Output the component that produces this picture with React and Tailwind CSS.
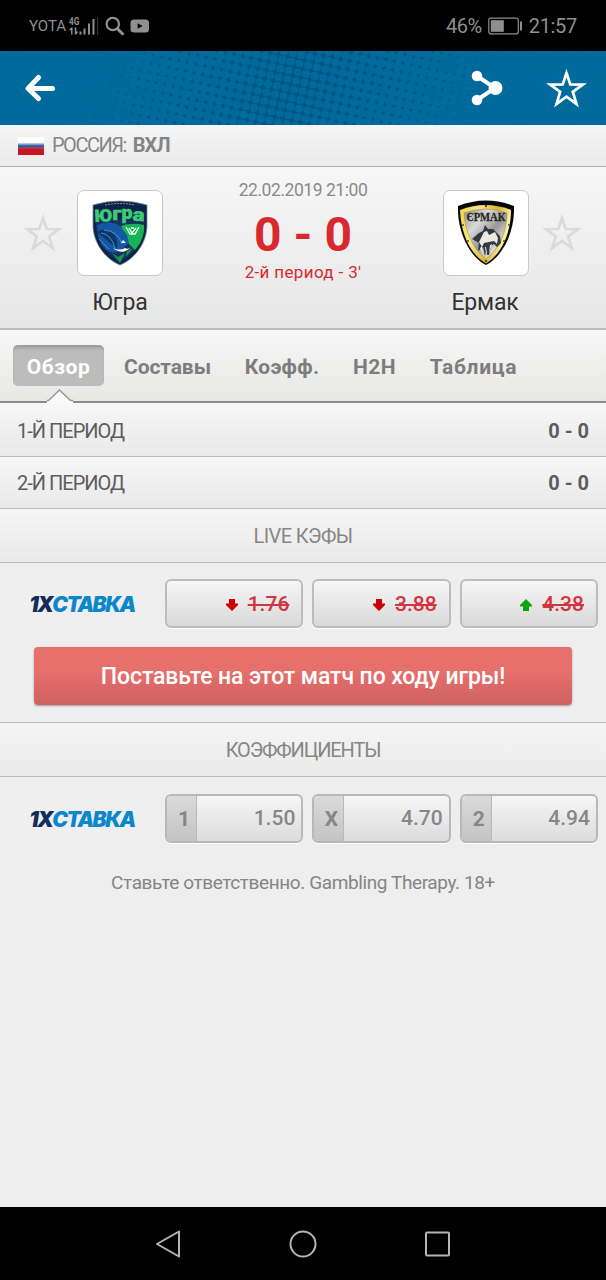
import React from 'react';
import clsx from 'clsx';

const tabs = [
  { id: 'overview', label: 'Обзор', className: 'w-[91px] tracking-[0.5px]' },
  { id: 'lineups', label: 'Составы', className: 'ml-[20px] w-[87px] tracking-[-0.1px]' },
  { id: 'odds', label: 'Коэфф.', className: 'ml-[34px] w-[74px] tracking-[0.3px]' },
  { id: 'h2h', label: 'H2H', className: 'ml-[34px] w-[43px] tracking-[0.4px]' },
  { id: 'table', label: 'Таблица', className: 'ml-[34px] w-[87px] tracking-[0.7px]' }
];

const periods = [
  { name: '1-Й ПЕРИОД', score: '0 - 0' },
  { name: '2-Й ПЕРИОД', score: '0 - 0' }
];

const liveOdds = [
  { value: '1.76', up: false },
  { value: '3.88', up: false },
  { value: '4.38', up: true }
];

const preOdds = [
  { name: '1', value: '1.50' },
  { name: 'X', value: '4.70' },
  { name: '2', value: '4.94' }
];

// Halftone grid: dots grow towards the edges until they swallow the dark background
const dots = [];
const angle = (12 * Math.PI) / 180;
for (let row = -24; row < 24; row++) {
  for (let col = -6; col < 84; col++) {
    const x = col * 8.8 * Math.cos(angle) - row * 8.8 * Math.sin(angle);
    const y = col * 8.8 * Math.sin(angle) + row * 8.8 * Math.cos(angle) - 60;
    if (x < -8 || x > 614 || y < -8 || y > 82) continue;
    const d = Math.min(1, Math.abs(x - 290 + (y - 37) * 0.4) / 250);
    dots.push({ x: x.toFixed(1), y: y.toFixed(1), r: (3.9 + d * 2.5).toFixed(2) });
  }
}

const Star = ({ className, strokeWidth }) => (
  <svg viewBox="0 0 40 40" className={className} fill="none" stroke="currentColor" strokeWidth={strokeWidth}>
    <path d="M20 5 L23.700 16 L36 16.200 L26.200 23.300 L29.700 35 L20 28 L10.300 35 L13.800 23.300 L4 16.200 L16.300 16 Z" />
  </svg>
);

const StatusBar = () => (
  <div className="flex h-[51px] items-center bg-black pl-[29px] pr-[29px] pt-[1px] text-[#8f8f8f]">
    <span className="text-[15px] tracking-[0px]">YOTA</span>
    <svg viewBox="0 0 30 20" className="ml-[3px] h-[20px] w-[30px]" fill="currentColor">
      <text x="0" y="8.500" fontSize="11" fontWeight="700" textLength="10.500" lengthAdjust="spacingAndGlyphs">4G</text>
      <path d="M2.800 11.500v7M2.800 12l-2 2M6.500 18.500v-7M6.500 18l2-2.500" stroke="currentColor" strokeWidth="1.500" fill="none" />
      <path d="M10.500 15.500h2v3h-2zM14.500 12.500h2v6h-2zM19 7.500h2v11h-2zM23.500 3h2v15.500h-2z" />
      <path d="M28 1h1.200v18h-1.200z" opacity="0.35" />
    </svg>
    <svg viewBox="0 0 20 20" className="ml-[6px] h-[20px] w-[20px]" fill="none" stroke="currentColor">
      <circle cx="7.800" cy="8" r="6.200" strokeWidth="2.200" />
      <path d="M12.400 12.600 L18.500 18.700" strokeWidth="3" />
    </svg>
    <svg viewBox="0 0 20 14" className="ml-[5px] h-[14px] w-[20px]">
      <rect x="0.500" y="0.500" width="18.500" height="13" rx="3.500" fill="currentColor" />
      <path d="M7.600 4.200 L12.600 7 L7.600 9.800 Z" fill="#000" />
    </svg>
    <span className="ml-auto text-[20px] tracking-[-0.5px]">46%</span>
    <svg viewBox="0 0 35 18" className="ml-[6px] h-[18px] w-[35px]">
      <rect x="0.800" y="1.200" width="29.500" height="15.600" rx="2" fill="none" stroke="currentColor" strokeWidth="1.200" />
      <rect x="2.800" y="3.200" width="13" height="11.600" fill="currentColor" />
      <rect x="32" y="4.500" width="2" height="9" fill="currentColor" />
    </svg>
    <span className="ml-[6px] text-[20px] tracking-[-0.3px]">21:57</span>
  </div>
);

const Header = () => (
  <header className="relative flex h-[74px] items-center bg-[#006a9d] pl-[24px] pr-[19px] text-white">
    <svg viewBox="0 0 606 74" className="absolute inset-0 h-[74px] w-full">
      <rect width="606" height="74" fill="#005682" />
      {dots.map((dot, i) => (
        <circle key={i} cx={dot.x} cy={dot.y} r={dot.r} fill="#006a9d" />
      ))}
    </svg>
    <svg viewBox="0 0 32 30" className="relative h-[30px] w-[32px]" fill="none" stroke="currentColor" strokeWidth="5" strokeLinecap="round" strokeLinejoin="round">
      <path d="M14.500 4.500 L4 15.500 L14.500 25.500 M5 15.500 H28.500" />
    </svg>
    <svg viewBox="0 0 32 36" className="relative ml-auto h-[36px] w-[32px]" fill="currentColor">
      <path d="M6 6 L24 18 L6 30" fill="none" stroke="currentColor" strokeWidth="4" />
      <circle cx="6" cy="6" r="5.300" />
      <circle cx="6" cy="30" r="5.300" />
      <circle cx="24.500" cy="18" r="7" />
    </svg>
    <Star className="relative ml-[43px] h-[41px] w-[41px]" strokeWidth="2.700" />
  </header>
);

const League = () => (
  <div className="flex h-[42px] items-center border-b border-[#aeaeae] bg-linear-to-b from-[#f5f5f5] to-[#ebebeb] pb-[2px] pl-[18px] text-[20px] text-[#858585]">
    <div className="mt-[3px] h-[18px] w-[26px] bg-linear-to-b from-white from-30% via-[#1c4fa0] via-50% to-[#cb1422] to-68%" />
    <span className="ml-[8px] tracking-[-1.5px]">РОССИЯ:</span>
    <span className="ml-[7px] font-bold tracking-[-1px]">ВХЛ</span>
  </div>
);

const UgraLogo = () => (
  <svg viewBox="0 0 56 66" className="h-[66px] w-[56px]">
    <path d="M1 5 Q28 -3 55 5 V27 C54 45 41 60 28 65 C15 60 2 45 1 27 Z" fill="#0d2447" stroke="#77879b" strokeWidth="0.8" />
    <path d="M4 23 Q28 15 52 23 V28 C51 43 39 57 28 61.500 C17 57 5 43 4 28 Z" fill="#12345e" />
    <path d="M29 26 Q40 22 52 25 C53 34 49 43 43 50 L36 43 L33 36 Z" fill="#18b356" />
    <path d="M5 25 Q17 20 27 25 L35 35 L37 43 L28 51 Q17 56 10 45 Q5 36 5 25 Z" fill="#1457a5" />
    <path d="M5 32 Q12 27 19 32 Q27 37 25 49 Q17 42 5 32 Z" fill="#103468" />
    <path d="M9 33 Q19 34 23 48 M12 30 Q26 31 30 44 M7 39 L17 49" fill="none" stroke="#4a9be0" strokeWidth="0.900" />
    <path d="M21 48 Q31 56 39 47 Q36 50 33 48 Q28 51 21 48 Z" fill="#fff" />
    <path d="M31 40 L34 43 L29 43 Z" fill="#fff" />
    <path d="M34 27 L38 34 H43 L47 27 M37 28 L40 33 L44 28 M39 28 H42" fill="none" stroke="#e7fff0" strokeWidth="1.400" />
    <path d="M20 53 L26 57 L33 53 L28 63 Z M35 51 L41 48 L34 57 Z" fill="#16994f" />
    <path d="M13 5 Q28 2 43 5" fill="none" stroke="#a6b5c8" strokeWidth="0.800" strokeDasharray="2 1" />
    <g fontSize="17" fontWeight="900" fill="#3fca78" stroke="#3fca78" strokeWidth="0.500">
      <text x="2.500" y="21.500" textLength="18" lengthAdjust="spacingAndGlyphs" transform="rotate(-3 11 16)">Ю</text>
      <text x="20.500" y="19.500" fontSize="18" textLength="9" lengthAdjust="spacingAndGlyphs">г</text>
      <text x="29.500" y="18.500" fontSize="18" textLength="11" lengthAdjust="spacingAndGlyphs">р</text>
      <text x="40.500" y="21" fontSize="18" textLength="12" lengthAdjust="spacingAndGlyphs" transform="rotate(4 46 16)">а</text>
    </g>
  </svg>
);

const ErmakLogo = () => (
  <svg viewBox="0 0 56 66" className="h-[66px] w-[56px]">
    <defs>
      <linearGradient id="gold" x1="0" y1="0" x2="1" y2="0.300">
        <stop offset="0" stopColor="#f0d43a" />
        <stop offset="0.350" stopColor="#f8ea8a" />
        <stop offset="0.700" stopColor="#d8b52c" />
        <stop offset="1" stopColor="#fff6b5" />
      </linearGradient>
      <linearGradient id="steel" x1="0" y1="0" x2="1" y2="1">
        <stop offset="0" stopColor="#8d8d8d" />
        <stop offset="0.300" stopColor="#d9d9d9" />
        <stop offset="0.550" stopColor="#989898" />
        <stop offset="0.800" stopColor="#e8e8e8" />
        <stop offset="1" stopColor="#8e8e8e" />
      </linearGradient>
    </defs>
    <path d="M0 6 Q28 -5 56 6 C57 30 46 56 28 65 C10 56 -1 30 0 6 Z" fill="#080808" />
    <path d="M2 10 Q28 0 53 10 C53 32 44 54 28 63.500 C12 54 3 34 2 10 Z" fill="url(#gold)" />
    <path d="M6 13 Q28 5 49 13 C49 31 41 50 28 58.500 C15 50 7 31 6 13 Z" fill="url(#steel)" stroke="#aa9140" strokeWidth="0.600" />
    <text x="8.500" y="20.500" fontFamily="Liberation Serif, serif" fontSize="13" fontWeight="700" fill="#2b241b" stroke="#2b241b" strokeWidth="0.300" textLength="39" lengthAdjust="spacingAndGlyphs">ЄРМАК</text>
    <path d="M14 39 L21 33 L25 31 L27 25 L30 29 L35 29 L42 36 L43 43 L39 47 L36 44 L33 46 L31 55 L29 55 L29 47 L27 56 L25 47 L20 51 L21 43 Z" fill="#333941" />
    <path d="M26 32 L29 31 L31 35 L37 32 L40 38 L39 44 L36 41 L31 42 L26 43 L24 47 L21 42 Z M22 48 L24 46 L25 55 Z M32 45 L34 44 L31 53 Z M27 47 L28 47 L28 53 Z" fill="#ece9df" />
    <g fill="#5c4b12">
      <circle cx="28" cy="6" r="1.200" />
      <circle cx="5" cy="25" r="1" />
      <circle cx="51" cy="25" r="1" />
      <circle cx="10" cy="41" r="1" />
      <circle cx="46" cy="41" r="1" />
      <circle cx="28" cy="61" r="1.200" />
    </g>
  </svg>
);

const Team = ({ name, children, className }) => (
  <div className="flex w-[86px] flex-col items-center">
    <div className="flex h-[86px] w-[86px] items-center justify-center rounded-[7px] border border-[#c9c9c9] bg-white">
      {children}
    </div>
    <span className={clsx('mt-[13px] text-[23px] leading-[28px] text-[#333]', className)}>{name}</span>
  </div>
);

const Match = () => (
  <section className="flex h-[163px] items-start border-b-2 border-[#bababa] bg-linear-to-b from-[#f7f7f7] to-[#e6e6e6] pl-[23px] pr-[24px] pt-[23px]">
    <Star className="mt-[23px] h-[40px] w-[40px] text-[#dadada]" strokeWidth="2.700" />
    <div className="ml-[14px]">
      <Team name="Югра" className="tracking-[0px]"><UgraLogo /></Team>
    </div>
    <div className="-mt-[11px] flex flex-1 flex-col items-center whitespace-nowrap">
      <span className="text-[17.5px] leading-[22px] tracking-[-0.45px] text-[#8a8a8a]">22.02.2019 21:00</span>
      <span className="mt-[10px] text-[48px] leading-[48px] font-bold text-[#d8292f]">0 - 0</span>
      <span className="mt-[2px] text-[17px] leading-[22px] tracking-[0.35px] text-[#d8292f]">2-й период - 3'</span>
    </div>
    <Team name="Ермак" className="relative -left-px tracking-[-0.2px]"><ErmakLogo /></Team>
    <Star className="ml-[13px] mt-[23px] h-[40px] w-[40px] text-[#dadada]" strokeWidth="2.700" />
  </section>
);

const Tabs = () => (
  <nav className="relative flex h-[73px] items-start border-b-2 border-[#8e8e8e] bg-linear-to-b from-[#f7f7f7] to-[#e7e7e5] pl-[13px] pt-[15px]">
    {tabs.map((tab, i) => (
      <div
        key={tab.id}
        className={clsx(
          'flex h-[41px] items-center justify-center whitespace-nowrap text-[21px] font-bold',
          i === 0
            ? 'rounded-[5px] border-t-2 border-[#9d9d9d] bg-[#bcbcbc] pt-[3px] text-white shadow-[inset_0_2px_2px_#aaaaaa]'
            : 'pt-[5px] text-[#7d7d7d]',
          tab.className
        )}
      >
        {tab.label}
      </div>
    ))}
    <svg viewBox="0 0 26 16" className="absolute -bottom-[4px] left-[47px] h-[16px] w-[26px]">
      <path d="M0 15 V12 H1 L12.500 1 L24 12 H26 V15 Z" fill="#f9f9f9" />
      <path d="M0 11.500 H1.500 L12.500 1 L23.500 11.500 H26" fill="none" stroke="#999" strokeWidth="1.500" />
    </svg>
  </nav>
);

const SectionTitle = ({ children, className }) => (
  <div className={clsx('flex items-center justify-center border-b border-[#b9b9b9] bg-linear-to-b from-[#f6f6f6] to-[#e9e9e9] text-[20px] text-[#868686]', className)}>
    {children}
  </div>
);

const Bookmaker = () => (
  <div className="flex h-[42px] w-[130px] items-center justify-center bg-[#efefef] pt-[2px] font-['Inter',sans-serif] text-[21px] font-black italic">
    <span className="tracking-[-1.5px] text-[#102d5c]">1X</span>
    <span className="tracking-[-1.5px] text-[#0d87cb]">СТАВКА</span>
  </div>
);

const OddsArrow = ({ up }) => (
  <svg viewBox="0 0 14 14" className={clsx('h-[14px] w-[14px]', up ? 'rotate-180 text-[#0ba60b]' : 'text-[#cc0000]')} fill="currentColor">
    <path d="M4 1 H10 V5.500 H13 V7 L7 13 L1 7 V5.500 H4 Z" />
  </svg>
);

const App = () => {
  return (
    <div className="flex h-[1280px] w-[606px] flex-col overflow-hidden bg-[#eeeeee] font-['Roboto',sans-serif]">
      <StatusBar />
      <Header />
      <League />
      <Match />
      <Tabs />

      {/* Periods */}
      {periods.map((period, i) => (
        <div
          key={period.name}
          className={clsx(
            'flex items-center justify-between border-b border-[#b9b9b9] bg-linear-to-b from-[#f7f7f7] to-[#e9e9e9] pl-[17px] pr-[17px] text-[20px] text-[#5d5d5d]',
            i === 0 ? 'h-[54px] pt-[2px]' : 'h-[52px]'
          )}
        >
          <span className="tracking-[-1px]">{period.name}</span>
          <span className="font-bold">{period.score}</span>
        </div>
      ))}

      {/* Live odds */}
      <SectionTitle className="h-[54px] tracking-[-0.6px]">LIVE КЭФЫ</SectionTitle>
      <div className="flex items-center gap-[9px] pl-[17px] pr-[8px] pt-[16px]">
        <div className="mr-[9px]"><Bookmaker /></div>
        {liveOdds.map(odd => (
          <div key={odd.value} className="flex h-[49px] flex-1 items-center justify-end rounded-[6px] border-2 border-[#bcbcbc] bg-linear-to-b from-[#f6f6f6] to-[#d9d9d9] pr-[12px] pt-[2px] shadow-[0_1px_1px_#ffffff]">
            <OddsArrow up={odd.up} />
            <span className="ml-[9px] text-[21px] font-medium text-[#d33540] line-through decoration-2">{odd.value}</span>
          </div>
        ))}
      </div>
      <button className="mx-[34px] mt-[19px] h-[58px] shrink-0 rounded-[4px] bg-linear-to-b from-[#e76f6c] from-40% to-[#ce6260] pt-[2px] text-[23px] font-medium tracking-[-0.1px] whitespace-nowrap text-white shadow-[0_1px_2px_#999999]">
        Поставьте на этот матч по ходу игры!
      </button>

      {/* Pre-match odds */}
      <SectionTitle className="mt-[17px] h-[55px] border-t tracking-[-1.15px]">КОЭФФИЦИЕНТЫ</SectionTitle>
      <div className="flex items-center gap-[9px] pl-[17px] pr-[8px] pt-[17px]">
        <div className="mr-[9px]"><Bookmaker /></div>
        {preOdds.map(odd => (
          <div key={odd.name} className="flex h-[49px] flex-1 overflow-hidden rounded-[6px] border-2 border-[#b8b8b8] bg-linear-to-b from-[#f6f6f6] to-[#dcdcdc] text-[21px] text-[#868686] shadow-[0_1px_1px_#ffffff]">
            <div className="flex w-[30px] items-center justify-center border-r border-[#b8b8b8] bg-linear-to-b from-[#dadada] to-[#c4c4c4] pl-[5px] pt-[3px] font-bold">{odd.name}</div>
            <div className="flex flex-1 items-center justify-end pr-[6px] pt-[1px] font-medium">{odd.value}</div>
          </div>
        ))}
      </div>
      <p className="mt-[26px] text-center text-[19px] leading-[28px] tracking-[-0.4px] whitespace-nowrap text-[#858585]">
        Ставьте ответственно. Gambling Therapy. 18+
      </p>

      {/* Android navigation */}
      <div className="mt-auto flex h-[73px] shrink-0 items-center justify-between bg-black pl-[154px] pr-[154px] text-[#b5b5b5]">
        <svg viewBox="0 0 30 30" className="h-[30px] w-[30px]" fill="none" stroke="currentColor" strokeWidth="2">
          <path d="M25 2.500 V27.500 L3 15 Z" strokeLinejoin="round" />
        </svg>
        <svg viewBox="0 0 30 30" className="h-[30px] w-[30px]" fill="none" stroke="currentColor" strokeWidth="2">
          <circle cx="15" cy="15" r="12.500" />
        </svg>
        <svg viewBox="0 0 30 30" className="h-[30px] w-[30px]" fill="none" stroke="currentColor" strokeWidth="2">
          <rect x="4" y="3.500" width="23" height="23" rx="1" />
        </svg>
      </div>
    </div>
  );
};

export default App;
